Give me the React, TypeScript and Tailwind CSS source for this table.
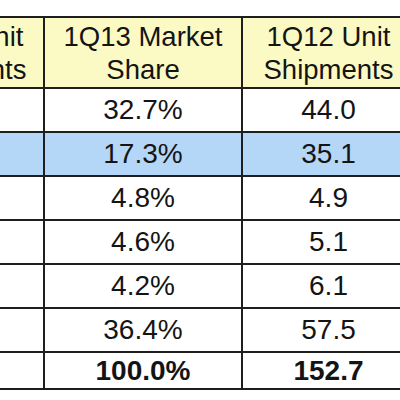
import React from "react";

const rows = [
  { units: "70.7", share: "32.7%", prev: "44.0" },
  { units: "37.4", share: "17.3%", prev: "35.1", highlight: true },
  { units: "10.3", share: "4.8%", prev: "4.9" },
  { units: "9.9", share: "4.6%", prev: "5.1" },
  { units: "9.1", share: "4.2%", prev: "6.1" },
  { units: "78.7", share: "36.4%", prev: "57.5" },
];

export default function App() {
  const cell = "border-2 border-[#1e1e1e] text-center p-0";
  return (
    <div
      className="w-[400px] h-[400px] overflow-hidden bg-white pt-[16px] text-[#141414]"
      style={{ fontFamily: '"Liberation Sans", Arial, sans-serif' }}
    >
      <table className="border-collapse ml-[-122px] table-fixed w-[536px]">
        <colgroup>
          <col className="w-[165px]" />
          <col className="w-[198px]" />
          <col className="w-[173px]" />
        </colgroup>
        <thead>
          <tr className="h-[71px] bg-[#fcfac4] text-[27.5px] leading-[33px]">
            <th className={cell + " font-normal"}>
              1Q13 Unit
              <br />
              Shipments
            </th>
            <th className={cell + " font-normal"}>
              1Q13 Market
              <br />
              Share
            </th>
            <th className={cell + " font-normal"}>
              1Q12 Unit
              <br />
              Shipments
            </th>
          </tr>
        </thead>
        <tbody className="text-[28px] leading-[30px]">
          {rows.map((r) => (
            <tr
              key={r.share}
              className={"h-[44px] " + (r.highlight ? "bg-[#b4d6f7]" : "bg-white")}
            >
              <td className={cell}>{r.units}</td>
              <td className={cell}>{r.share}</td>
              <td className={cell}>{r.prev}</td>
            </tr>
          ))}
          <tr className="h-[37px] font-bold">
            <td className={cell}>216.2</td>
            <td className={cell}>100.0%</td>
            <td className={cell}>152.7</td>
          </tr>
        </tbody>
      </table>
    </div>
  );
}
